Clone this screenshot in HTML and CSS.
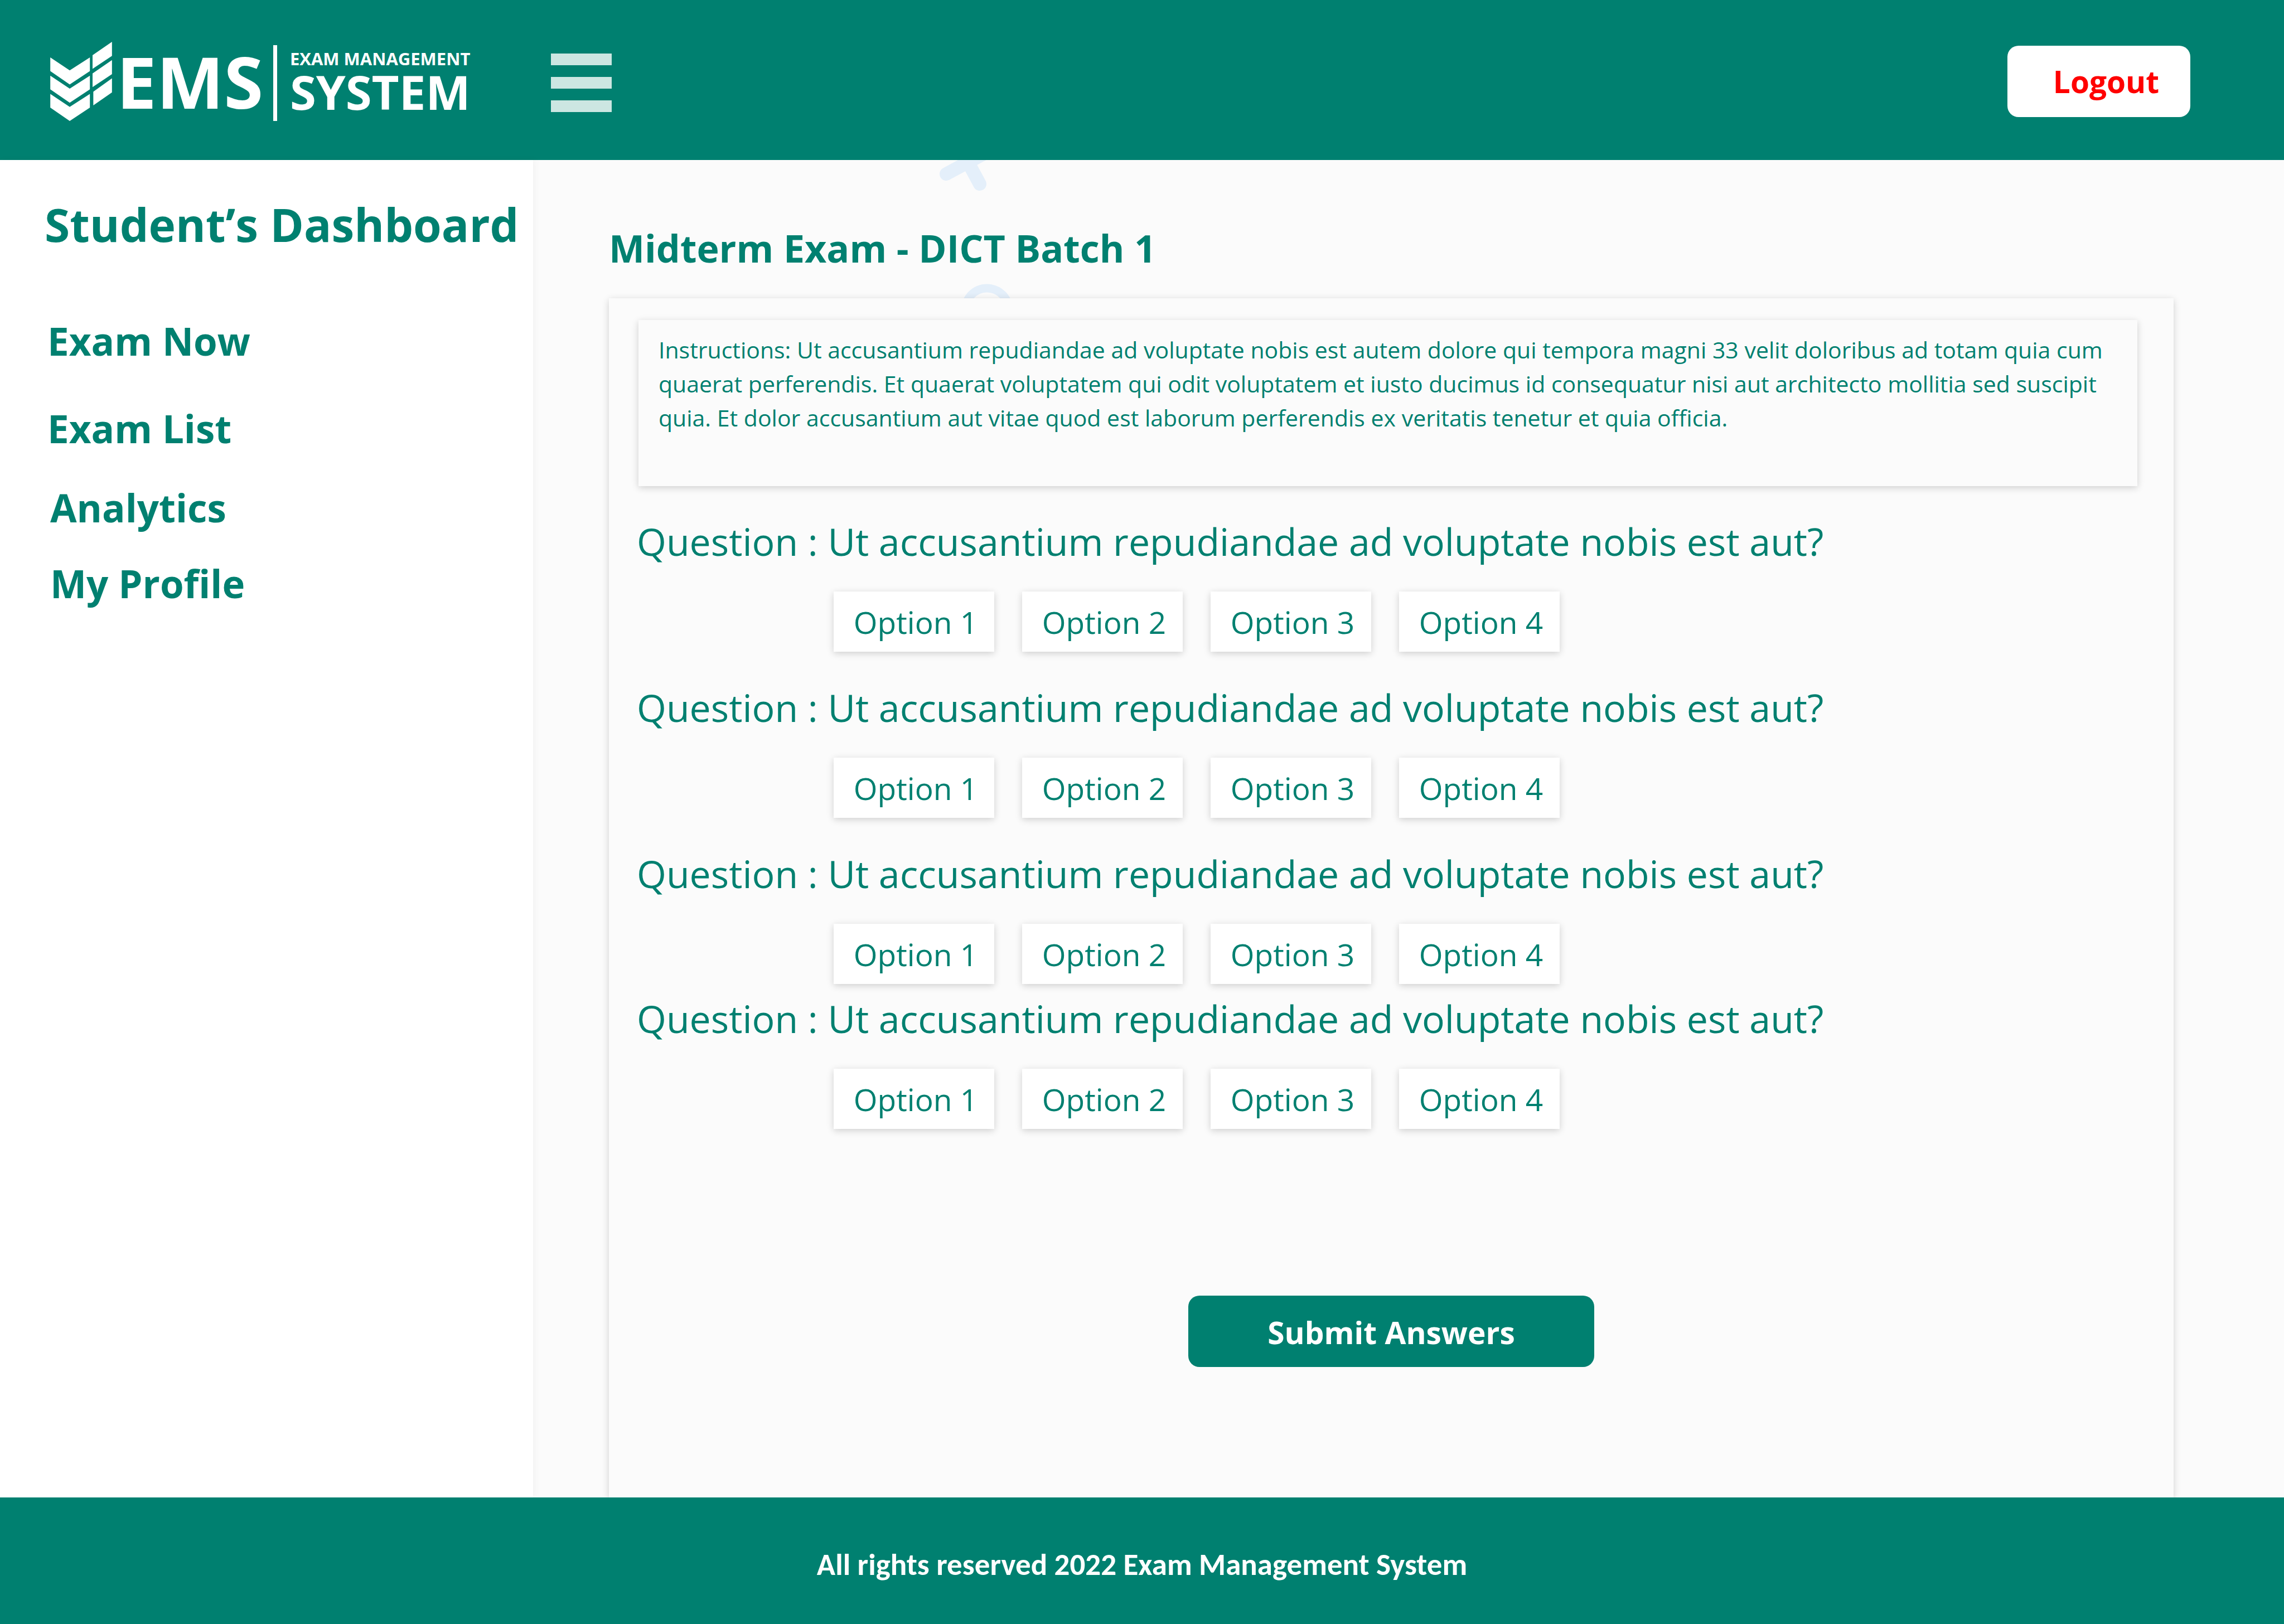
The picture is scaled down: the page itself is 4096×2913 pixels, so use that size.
FILE: index.html
```html
<!DOCTYPE html>
<html lang="en">
<head>
<meta charset="utf-8">
<title>Exam Management System</title>
<link rel="stylesheet" href="styles.css">
</head>
<body>
<header class="topbar">
  <a class="logo" href="#" aria-label="Exam Management System">
    <svg class="logo-mark" viewBox="0 0 162 208" aria-hidden="true">
      <path d="M0 41 51 75 104 41V77L51 112 0 77Z M0 89 51 123 104 89V125L51 160 0 125Z M0 137 51 171 104 137V173L51 208 0 173Z M111 35 162 0V37L111 71Z M111 83 162 48V85L111 119Z M113 131 162 96V133L113 167Z"/>
    </svg>
    <span class="logo-short">EMS</span>
    <span class="logo-rule"></span>
    <span class="logo-full"><span class="logo-line1">EXAM MANAGEMENT</span><span class="logo-line2">SYSTEM</span></span>
  </a>
  <button class="menu" type="button" aria-label="Menu"><span></span><span></span><span></span></button>
  <button class="btn logout" type="button">Logout</button>
</header>
<div class="body">
  <aside class="sidebar">
    <h1 class="side-title">Student’s Dashboard</h1>
    <nav>
      <ul class="nav nav-exams">
        <li><a href="#">Exam Now</a></li>
        <li><a href="#">Exam List</a></li>
      </ul>
      <ul class="nav nav-account">
        <li><a href="#">Analytics</a></li>
        <li><a href="#">My Profile</a></li>
      </ul>
    </nav>
  </aside>
  <main class="content">
    <svg class="decor" viewBox="0 0 160 320" aria-hidden="true">
      <path class="cross" d="M17 25 95 -17M77 43 35 -35"/>
      <circle class="ring" cx="90" cy="269" r="39"/>
    </svg>
    <h2 class="title">Midterm Exam - DICT Batch 1</h2>
    <form class="panel">
      <p class="instructions">Instructions: Ut accusantium repudiandae ad voluptate nobis est autem dolore qui tempora magni 33 velit doloribus ad totam quia cum quaerat perferendis. Et quaerat voluptatem qui odit voluptatem et iusto ducimus id consequatur nisi aut architecto mollitia sed suscipit quia. Et dolor accusantium aut vitae quod est laborum perferendis ex veritatis tenetur et quia officia.</p>
      <div class="questions">
        <section class="question">
          <h3>Question : Ut accusantium repudiandae ad voluptate nobis est aut?</h3>
          <div class="options"><button type="button">Option 1</button><button type="button">Option 2</button><button type="button">Option 3</button><button type="button">Option 4</button></div>
        </section>
        <section class="question">
          <h3>Question : Ut accusantium repudiandae ad voluptate nobis est aut?</h3>
          <div class="options"><button type="button">Option 1</button><button type="button">Option 2</button><button type="button">Option 3</button><button type="button">Option 4</button></div>
        </section>
        <section class="question">
          <h3>Question : Ut accusantium repudiandae ad voluptate nobis est aut?</h3>
          <div class="options"><button type="button">Option 1</button><button type="button">Option 2</button><button type="button">Option 3</button><button type="button">Option 4</button></div>
        </section>
        <section class="question compact">
          <h3>Question : Ut accusantium repudiandae ad voluptate nobis est aut?</h3>
          <div class="options"><button type="button">Option 1</button><button type="button">Option 2</button><button type="button">Option 3</button><button type="button">Option 4</button></div>
        </section>
      </div>
      <button class="btn submit" type="submit">Submit Answers</button>
    </form>
  </main>
</div>
<footer class="footer">All rights reserved 2022 Exam Management System</footer>
</body>
</html>
```
FILE: styles.css
```css
:root {
  --green: #008070;
  --page: #fbfbfb;
  --shadow: 0 3px 12px rgba(0, 0, 0, .18);
}

* { box-sizing: border-box; }

body {
  margin: 0;
  min-height: 100vh;
  display: flex;
  flex-direction: column;
  background: var(--page);
  color: var(--green);
  font-family: "Open Sans", "Noto Sans", sans-serif;
}

h1, h2, h3, p, ul { margin: 0; padding: 0; }
button { font: inherit; border: 0; padding: 0; cursor: pointer; }
a { color: inherit; text-decoration: none; }

/* Top bar */
.topbar {
  height: 287px;
  display: flex;
  align-items: center;
  padding: 4px 168px 0 90px;
  background: var(--green);
}
.logo { display: flex; align-items: center; color: #fff; font-weight: 700; }
.logo-mark { width: 111px; height: 142px; fill: #fff; }
.logo-short { margin-left: 8px; font-size: 128px; line-height: 128px; }
.logo-rule { align-self: flex-end; width: 7px; height: 136px; margin: 0 23px 0 18px; background: #fff; }
.logo-full { display: flex; flex-direction: column; }
.logo-line1 { font-size: 31px; line-height: 36px; }
.logo-line2 { font-size: 85px; line-height: 82px; }
.menu {
  display: flex;
  flex-direction: column;
  gap: 21px;
  width: 109px;
  margin-left: 144px;
  padding-top: 6px;
  background: none;
}
.menu span { height: 21px; background: #cce6e2; }
.btn {
  height: 128px;
  border-radius: 20px;
  font-size: 55px;
  font-weight: 700;
}
.logout { width: 328px; margin-left: auto; padding-left: 26px; background: #fff; color: #f00; }

/* Sidebar */
.body { flex: 1; display: flex; }
.sidebar {
  width: 956px;
  flex: none;
  padding: 55px 0 0 80px;
  background: #fff;
  box-shadow: 3px 0 12px rgba(0, 0, 0, .04);
}
.side-title { font-size: 82px; line-height: 120px; white-space: nowrap; }
.nav { list-style: none; font-size: 69px; line-height: 100px; font-weight: 700; display: flex; flex-direction: column; }
.nav-exams { gap: 57px; padding: 99px 0 42px 5px; }
.nav-account { gap: 36px; padding-left: 10px; }

/* Exam */
.content {
  flex: 1;
  position: relative;
  display: flex;
  flex-direction: column;
  padding: 108px 198px 0 136px;
}
.decor { position: absolute; left: 724px; top: 0; width: 160px; height: 320px; fill: none; stroke: #e4effa; }
.cross { stroke-width: 24; stroke-linecap: round; }
.ring { stroke-width: 15; }
.title { position: relative; font-size: 68px; line-height: 100px; }
.panel {
  position: relative;
  flex: 1;
  display: flex;
  flex-direction: column;
  margin-top: 40px;
  padding: 39px 50px 0;
  background: var(--page);
  box-shadow: var(--shadow);
}
.instructions {
  min-height: 298px;
  margin: 0 15px 0 3px;
  padding: 23px 60px 0 36px;
  font-size: 41px;
  line-height: 61px;
  box-shadow: var(--shadow);
}
.questions { padding-top: 49px; }
.question + .question { margin-top: 50px; }
.question + .compact { margin-top: 12px; }
.question h3 { font-size: 68px; line-height: 100px; font-weight: 400; white-space: nowrap; }
.options { display: flex; gap: 50px; margin-top: 40px; padding-left: 353px; }
.options button {
  width: 288px;
  height: 108px;
  padding-left: 6px;
  background: #fff;
  color: var(--green);
  font-size: 55px;
  box-shadow: var(--shadow);
}
.submit { width: 728px; margin: 299px auto 0; padding-top: 2px; background: var(--green); color: #fff; }

.footer {
  height: 227px;
  display: flex;
  align-items: center;
  justify-content: center;
  padding-top: 14px;
  position: relative;
  background: var(--green);
  color: #fff;
  font-family: Carlito, Lato, "Open Sans", sans-serif;
  font-size: 55px;
  font-weight: 700;
}
```
